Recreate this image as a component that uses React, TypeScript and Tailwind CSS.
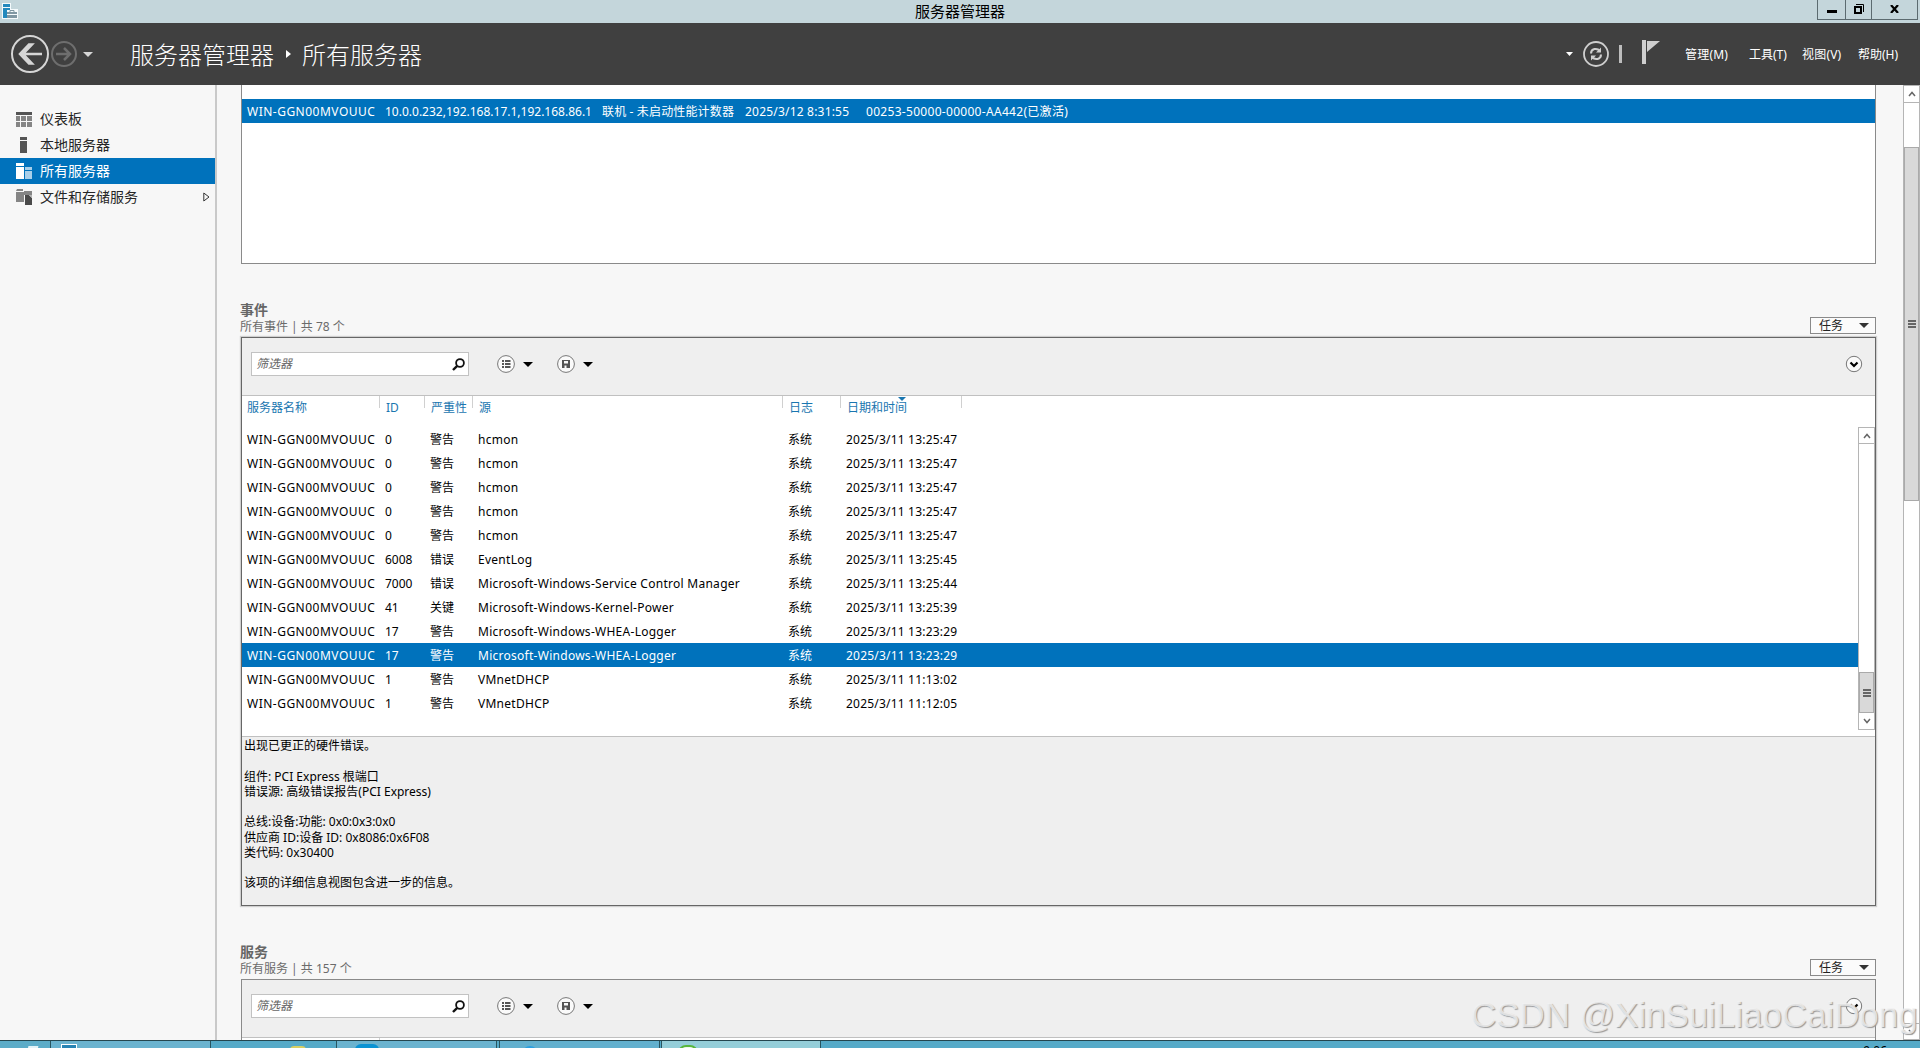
import type { ReactNode } from 'react';

type EventRow = {
  id: string;
  severity: string;
  source: string;
  date: string;
  selected?: boolean;
};

const SERVER = 'WIN-GGN00MVOUUC';

const events: EventRow[] = [
  { id: '0', severity: '警告', source: 'hcmon', date: '2025/3/11 13:25:47' },
  { id: '0', severity: '警告', source: 'hcmon', date: '2025/3/11 13:25:47' },
  { id: '0', severity: '警告', source: 'hcmon', date: '2025/3/11 13:25:47' },
  { id: '0', severity: '警告', source: 'hcmon', date: '2025/3/11 13:25:47' },
  { id: '0', severity: '警告', source: 'hcmon', date: '2025/3/11 13:25:47' },
  { id: '6008', severity: '错误', source: 'EventLog', date: '2025/3/11 13:25:45' },
  { id: '7000', severity: '错误', source: 'Microsoft-Windows-Service Control Manager', date: '2025/3/11 13:25:44' },
  { id: '41', severity: '关键', source: 'Microsoft-Windows-Kernel-Power', date: '2025/3/11 13:25:39' },
  { id: '17', severity: '警告', source: 'Microsoft-Windows-WHEA-Logger', date: '2025/3/11 13:23:29' },
  { id: '17', severity: '警告', source: 'Microsoft-Windows-WHEA-Logger', date: '2025/3/11 13:23:29', selected: true },
  { id: '1', severity: '警告', source: 'VMnetDHCP', date: '2025/3/11 11:13:02' },
  { id: '1', severity: '警告', source: 'VMnetDHCP', date: '2025/3/11 11:12:05' },
];

const details = [
  '出现已更正的硬件错误。',
  '',
  '组件: PCI Express 根端口',
  '错误源: 高级错误报告(PCI Express)',
  '',
  '总线:设备:功能: 0x0:0x3:0x0',
  '供应商 ID:设备 ID: 0x8086:0x6F08',
  '类代码: 0x30400',
  '',
  '该项的详细信息视图包含进一步的信息。',
];

const Caret = ({ className = '' }: { className?: string }) => (
  <svg width="10" height="5" viewBox="0 0 10 5" className={className} fill="currentColor">
    <path d="M0 0h10L5 5z" />
  </svg>
);

const TitleBar = () => (
  <div className="flex h-[23px] shrink-0 items-start bg-[#c4d6db]">
    <div className="flex flex-1 pl-0.5 pt-[3px]">
      <svg width="16" height="16" viewBox="0 0 16 16">
        <path d="M0 0h9v6h7v10H0z" fill="#f4fafc" />
        <path d="M1 1h7v3H1z M1 5h7v2H5v8H1z" fill="#2389bd" />
        <path d="M5 9h10v2H5z M5 12h10v3H5z" fill="#7f97a3" />
        <path d="M8 9V7.500h4V9" fill="none" stroke="#7f97a3" />
      </svg>
    </div>
    <div className="text-[15px] leading-[23px] text-black">服务器管理器</div>
    <div className="flex flex-1 justify-end pr-0.5">
      <div className="flex h-5 w-[101px] border border-t-0 border-[#5c6b70]">
        <div className="flex w-[28px] items-start justify-center border-r border-[#5c6b70]">
          <div className="mt-[10px] h-[3px] w-[10px] bg-black" />
        </div>
        <div className="flex w-[26px] justify-center border-r border-[#5c6b70] pt-1">
          <svg width="10" height="10" viewBox="0 0 10 10" fill="none" stroke="#000">
            <path d="M2 .5h7.500V8" />
            <path d="M1 3h6v6H1z" strokeWidth="2" />
          </svg>
        </div>
        <div className="flex flex-1 justify-center pt-[5px]">
          <svg width="9" height="8" viewBox="0 0 9 8" stroke="#000" strokeWidth="2.200">
            <path d="M1 0l7 8M8 0L1 8" />
          </svg>
        </div>
      </div>
    </div>
  </div>
);

const Header = () => (
  <div className="flex h-[62px] shrink-0 items-center bg-[#404040] text-white">
    <div className="flex w-[130px] shrink-0 items-center pl-[10px]">
      <svg width="40" height="40" viewBox="0 0 40 40" fill="none" stroke="#d6d6d6">
        <circle cx="20" cy="20" r="18" strokeWidth="2" />
        <path d="M32 20H11M22 10.500H19L10 20l9 9.500h3L13 20z" strokeWidth="2.500" />
      </svg>
      <svg width="28" height="28" viewBox="0 0 28 28" fill="none" stroke="#6e6e6e">
        <circle cx="14" cy="14" r="12" strokeWidth="2" />
        <path d="M6 14h13M14 8l6 6-6 6" strokeWidth="2.500" />
      </svg>
      <Caret className="ml-[5px] text-[#d6d6d6]" />
    </div>
    <div className="pt-px text-2xl font-light leading-[62px]">服务器管理器</div>
    <svg width="5" height="8" viewBox="0 0 5 8" className="ml-[12px] mr-[11px]" fill="#fff">
      <path d="M0 0l5 4-5 4z" />
    </svg>
    <div className="pt-px text-2xl font-light leading-[62px]">所有服务器</div>
    <div className="ml-auto flex items-center">
      <svg width="7" height="4" viewBox="0 0 7 4" fill="#fff">
        <path d="M0 0h7L3.500 4z" />
      </svg>
      <svg width="26" height="26" viewBox="0 0 26 26" className="ml-[10px]" fill="none" stroke="#cfcfcf">
        <circle cx="13" cy="13" r="12" strokeWidth="1.800" />
        <path d="M8 12.500c0-5 6-6 9-2.500M18 13.500c0 5-6 6-9 2.500" strokeWidth="2" />
        <path d="M18 6.500v5h-5zM8 19.500v-5h5z" fill="#cfcfcf" stroke="none" />
      </svg>
      <div className="ml-[10px] h-[18px] w-[3px] bg-[#bdbdbd]" />
      <svg width="18" height="24" viewBox="0 0 18 24" className="ml-5 -mt-1" fill="#cfcfcf">
        <path d="M0 0h4v24H0zM5 1h13L5 12z" />
      </svg>
      <div className="ml-[25px] flex pt-0.5 text-xs leading-4">
        <div className="w-16 tracking-[0.2px]">管理(M)</div>
        <div className="w-[53px]">工具(T)</div>
        <div className="w-14 tracking-[0.2px]">视图(V)</div>
        <div className="w-[62px]">帮助(H)</div>
      </div>
    </div>
  </div>
);

type NavItemProps = {
  icon: ReactNode;
  label: string;
  selected?: boolean;
  expandable?: boolean;
};

const NavItem = ({ icon, label, selected, expandable }: NavItemProps) => (
  <div
    className={`flex h-[26px] items-center pl-4 pr-[5px] text-sm leading-[26px] ${
      selected ? 'bg-[#0072bc] text-white' : 'text-[#262626]'
    }`}
  >
    <svg width="16" height="16" viewBox="0 0 16 16" className="mr-2">
      {icon}
    </svg>
    {label}
    {expandable && (
      <svg width="7" height="10" viewBox="0 0 7 10" className="ml-auto" fill="none" stroke="#333">
        <path d="M.8 1v8L6 5z" />
      </svg>
    )}
  </div>
);

const Sidebar = () => (
  <div className="w-[215px] shrink-0 pt-[21px]">
    <NavItem
      label="仪表板"
      icon={
        <>
          <path d="M0 1h16v3H0z" fill="#555" />
          <path d="M0 5h4v5H0zM0 11h4v5H0zM5 5h5v5H5zM5 11h5v5H5zM11 5h5v5h-5zM11 11h5v5h-5z" fill="#858585" />
        </>
      }
    />
    <NavItem label="本地服务器" icon={<path d="M4 0h7v3H4zM4 4h7v12H4z" fill="#555" />} />
    <NavItem
      label="所有服务器"
      selected
      icon={
        <>
          <path d="M0 0h8v3H0zM0 4h8v12H0z" fill="#fff" />
          <path d="M9 4h7v3H9zM9 8h7v8H9z" fill="#a9cfe9" />
        </>
      }
    />
    <NavItem
      label="文件和存储服务"
      expandable
      icon={
        <>
          <path d="M1 0h6v2H0zM0 3h8v10H0zM8 2h8v4H8z" fill="#858585" />
          <path d="M9 6h4l3 3v7H9z" fill="#4a4a4a" />
          <path d="M13 6l3 3v-3z" fill="#b5b5b5" />
        </>
      }
    />
  </div>
);

const SectionTitle = ({ title, subtitle }: { title: string; subtitle: string }) => (
  <div className="flex h-9 w-[1635px] items-end justify-between">
    <div className="-ml-px h-9 text-[#666]">
      <div className="text-sm font-bold leading-[18px]">{title}</div>
      <div className="pt-px text-xs leading-[14px] text-[#6b6b6b]">{subtitle}</div>
    </div>
    <div className="mb-[3px] flex h-[17px] w-[66px] items-center justify-between border border-[#8a8a8a] bg-[#fbfbfb] pl-2 pr-1.5 text-xs leading-[15px] text-[#222]">
      任务
      <Caret className="text-[#333]" />
    </div>
  </div>
);

const RoundIcon = ({ children }: { children: ReactNode }) => (
  <svg width="18" height="18" viewBox="0 0 18 18" fill="#555">
    <circle cx="9" cy="9" r="8.400" fill="#fafafa" stroke="#777" />
    {children}
  </svg>
);

const Toolbar = () => (
  <div className="flex h-[57px] items-start bg-[#efefef] pl-[9px] pr-[12px] pt-[14px] text-black">
    <div className="flex h-6 w-[218px] items-center justify-between border border-[#c2c2c2] bg-white pl-1 pr-[3px] text-xs italic leading-[22px] text-[#666]">
      筛选器
      <svg width="13" height="13" viewBox="0 0 13 13" fill="none" stroke="#111">
        <circle cx="8" cy="5" r="3.900" strokeWidth="1.800" />
        <path d="M5.200 7.800L1 12" strokeWidth="2.400" />
      </svg>
    </div>
    <div className="flex h-6 items-center pl-7">
      <RoundIcon>
        <path d="M5 5h2v2H5zM5 8h2v2H5zM5 11h2v2H5zM8 5h5.500v2H8zM8 8h5.500v2H8zM8 11h5.500v2H8z" />
      </RoundIcon>
      <Caret className="ml-[8px]" />
      <div className="w-6" />
      <RoundIcon>
        <path d="M5 5h8v8H5z" />
        <path d="M7 6h4v2.500H7zM7.500 10.500h2V13h-2z" fill="#fafafa" />
      </RoundIcon>
      <Caret className="ml-[8px]" />
    </div>
    <div className="ml-auto flex h-6 items-center">
      <svg width="18" height="18" viewBox="0 0 18 18" fill="none">
        <circle cx="9" cy="9" r="7.700" fill="#fafafa" stroke="#777" />
        <path d="M5.500 7.500L9 11l3.500-3.500" stroke="#000" strokeWidth="2.200" />
      </svg>
    </div>
  </div>
);

const columns = [
  { label: '服务器名称', width: 'w-[138px]' },
  { label: 'ID', width: 'w-[45px]' },
  { label: '严重性', width: 'w-[48px]' },
  { label: '源', width: 'w-[310px]' },
  { label: '日志', width: 'w-[58px]' },
  { label: '日期和时间', width: 'w-[121px]' },
];

const ColumnHeader = () => (
  <div className="flex h-[31px] text-xs leading-[24px] text-[#1a76b0]">
    {columns.map((column, i) => (
      <div key={column.label} className={`relative ${column.width} ${i === 0 ? 'pl-[5px]' : 'pl-[6px]'}`}>
        {column.label}
        <div className="absolute right-0 top-0 h-3 w-px bg-[#d0d0d0]" />
        {i === 5 && (
          <svg width="8" height="4" viewBox="0 0 8 4" className="absolute left-[57px] top-px" fill="#1a76b0">
            <path d="M0 0h8L4 4z" />
          </svg>
        )}
      </div>
    ))}
  </div>
);

const Grip = () => (
  <div className="flex flex-col gap-px">
    <div className="h-[2px] w-2 bg-[#666]" />
    <div className="h-[2px] w-2 bg-[#666]" />
    <div className="h-[2px] w-2 bg-[#666]" />
  </div>
);

const Chevron = ({ down }: { down?: boolean }) => (
  <svg width="8" height="6" viewBox="0 0 8 6" fill="none" stroke="#666" strokeWidth="1.500">
    <path d={down ? 'M1 1l3 3.500L7 1' : 'M1 5l3-3.500L7 5'} />
  </svg>
);

const EventsPanel = () => (
  <div className="h-[569px] w-[1635px] border border-[#666] bg-white shadow-[0_0_1px_1px_#cfcfcf]">
    <Toolbar />
    <div className="h-[342px] border-y border-[#c0c0c0]">
      <ColumnHeader />
      <div className="flex h-[303px]">
        <div className="flex-1 text-xs leading-[26px] text-black">
          {events.map((event, i) => (
            <div key={i} className={`flex h-6 whitespace-nowrap ${event.selected ? 'bg-[#0072bc] text-white' : ''}`}>
              <div className="w-[138px] pl-[5px] tracking-[0.49px]">{SERVER}</div>
              <div className="w-[45px] pl-[5px]">{event.id}</div>
              <div className="w-[48px] pl-[5px]">{event.severity}</div>
              <div className="w-[311px] pl-[5px] tracking-[0.27px]">{event.source}</div>
              <div className="w-[57px] pl-[4px]">系统</div>
              <div className="w-[121px] pl-[5px] tracking-[0.2px]">{event.date}</div>
            </div>
          ))}
        </div>
        <div className="flex w-[17px] flex-col border border-[#b5b5b5] bg-white">
          <div className="flex h-4 items-center justify-center border-b border-[#b5b5b5]">
            <Chevron />
          </div>
          <div className="h-[228px]" />
          <div className="flex h-[41px] items-center justify-center border border-[#aaa] bg-[#d9d9d9]">
            <Grip />
          </div>
          <div className="flex flex-1 items-center justify-center">
            <Chevron down />
          </div>
        </div>
      </div>
    </div>
    <div className="h-[168px] bg-[#efefef] pl-[2px] pt-px text-xs leading-[15.25px] text-black">
      {details.map((line, i) => (
        <div key={i} className="h-[15.25px]">
          {line}
        </div>
      ))}
    </div>
  </div>
);

const Main = () => (
  <div className="min-w-0 flex-1 pl-6">
    <div className="h-[179px] w-[1635px] border border-t-0 border-[#8a8a8a] bg-white pt-[14px]">
      <div className="flex h-6 whitespace-nowrap bg-[#0072bc] pl-[5px] text-xs leading-[26px] text-white">
        <div className="w-[138px] tracking-[0.49px]">{SERVER}</div>
        <div className="w-[217px]">10.0.0.232,192.168.17.1,192.168.86.1</div>
        <div className="w-[143px] tracking-[0.15px]">联机 - 未启动性能计数器</div>
        <div className="w-[121px] tracking-[0.2px]">2025/3/12 8:31:55</div>
        <div className="tracking-[0.3px]">00253-50000-00000-AA442(已激活)</div>
      </div>
    </div>
    <div className="pt-[37px]">
      <SectionTitle title="事件" subtitle="所有事件 | 共 78 个" />
      <EventsPanel />
    </div>
    <div className="pt-[37px]">
      <SectionTitle title="服务" subtitle="所有服务 | 共 157 个" />
      <div className="h-[80px] w-[1635px] border border-[#8a8a8a] bg-white">
        <Toolbar />
        <div className="flex h-5 border-t border-[#c0c0c0]">
          <div className="w-[138px] border-r border-[#d0d0d0]" />
        </div>
      </div>
    </div>
  </div>
);

const PageScrollbar = () => (
  <div className="flex w-[17px] shrink-0 flex-col border border-[#b5b5b5] bg-white">
    <div className="flex h-[17px] items-center justify-center border-b border-[#b5b5b5]">
      <Chevron />
    </div>
    <div className="h-[44px]" />
    <div className="flex h-[354px] items-center justify-center border border-[#aaa] bg-[#d9d9d9]">
      <Grip />
    </div>
    <div className="flex-1" />
    <div className="flex h-4 items-center justify-center border-t border-[#b5b5b5]">
      <Chevron down />
    </div>
  </div>
);

const Taskbar = () => (
  <div className="flex h-2 shrink-0 overflow-hidden border-t border-[#24464f] bg-[#55aac8]">
    <div className="w-[51px] border-r border-[#285560] bg-[#5cacc8] pl-7 pt-[5px]">
      <div className="h-1 w-2.5 -skew-x-12 bg-[#e4f3f8]" />
    </div>
    <div className="w-[160px] border-r border-[#285560] bg-[#6ab3cf] pl-[10px] pt-[3px]">
      <div className="h-3 w-4 border border-white bg-[#2784b4]" />
    </div>
    <div className="w-[126px] border-r border-[#285560] pl-[79px] pt-[5px]">
      <div className="h-2 w-4 rounded-t bg-[#d8cf62]" />
    </div>
    <div className="w-[160px] border-r border-[#285560] bg-[#6ab3cf] pl-[18px] pt-[3px]">
      <div className="h-3 w-6 rounded-t-md bg-[#0a93d3]" />
    </div>
    <div className="ml-0.5 w-[161px] border-x border-[#285560] bg-[#62b0ce] pl-[22px] pt-[5px]">
      <div className="h-4 w-4 rounded-full bg-[#2a9fe0]" />
    </div>
    <div className="ml-px w-[160px] border-x border-[#285560] bg-[#94ced9] pl-4 pt-1">
      <div className="h-4 w-5 rounded-full border-2 border-[#58b63c] bg-[#eef8ee]" />
    </div>
    <div className="ml-auto mr-[33px] mt-1 h-4 text-xs leading-3 text-black">9:06</div>
  </div>
);

export default function App() {
  return (
    <div className="relative flex h-[1048px] w-[1920px] flex-col overflow-hidden bg-[#f7f7f7] font-['Noto_Sans','Noto_Sans_CJK_SC',sans-serif]">
      <TitleBar />
      <Header />
      <div className="flex h-[955px] overflow-hidden">
        <Sidebar />
        <div className="w-[2px] shrink-0 bg-[#c9c9c9]" />
        <Main />
        <PageScrollbar />
      </div>
      <Taskbar />
      <div className="absolute left-[1471px] top-[995px] whitespace-nowrap font-['Liberation_Sans',sans-serif] text-[34.900px] leading-10 text-[#f4f4f4]/80 [text-shadow:1px_1px_1px_#999]">
        CSDN @XinSuiLiaoCaiDong
      </div>
    </div>
  );
}
